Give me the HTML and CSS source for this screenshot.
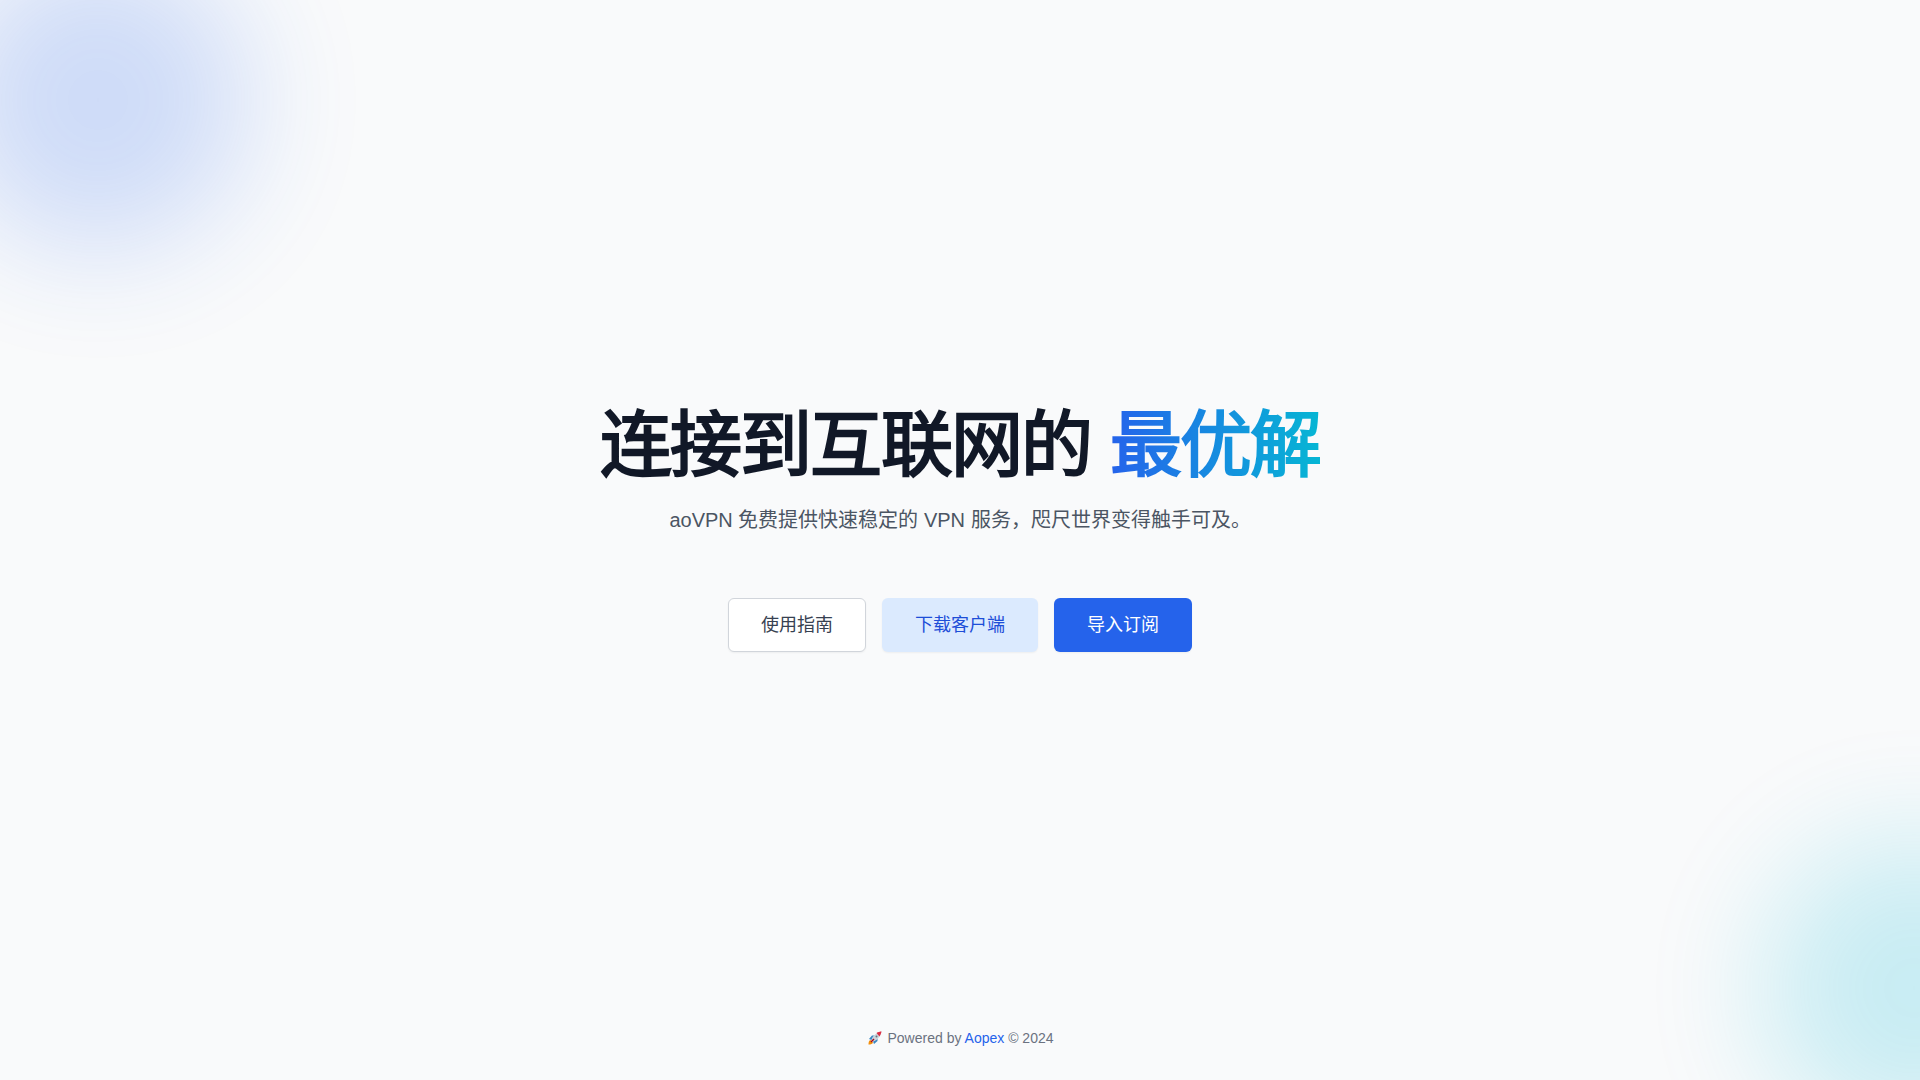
FILE: index.html
```html
<!DOCTYPE html>
<html lang="zh-CN">
<head>
<meta charset="utf-8">
<meta name="viewport" content="width=device-width, initial-scale=1">
<title>aoVPN</title>
<link rel="stylesheet" href="styles.css">
</head>
<body>
<div class="backdrop" aria-hidden="true">
  <div class="glow glow-blue"></div>
  <div class="glow glow-cyan"></div>
</div>
<main class="hero">
  <h1 class="title">连接到互联网的 <span class="accent">最优解</span></h1>
  <p class="lead">aoVPN 免费提供快速稳定的 VPN 服务，咫尺世界变得触手可及。</p>
  <div class="actions">
    <button class="btn btn-outline" type="button">使用指南</button>
    <button class="btn btn-soft" type="button">下载客户端</button>
    <button class="btn btn-solid" type="button">导入订阅</button>
  </div>
</main>
<footer class="footer">
  <svg class="rocket" viewBox="0 0 28 28" aria-hidden="true">
    <path d="M1 27c0-5 1-8 4-9l5 5c-1 3-4 4-9 4z" fill="#f4900c"/>
    <path d="M2 16l6-7h6l-7 9zM12 26l7-6v-6l-9 7z" fill="#3b88c3"/>
    <path d="M7 19c1-8 8-15 20-18-3 12-10 19-18 20z" fill="#ccd6dd"/>
    <path d="M17 4c3-2 7-3 10-3-1 4-2 7-4 10z" fill="#dd2e44"/>
    <circle cx="17" cy="11" r="2" fill="#66757f"/>
    <path d="M5 21l6-6 2 2-6 6z" fill="#a0041e"/>
  </svg>
  <span>Powered by <a href="#aopex">Aopex</a> © 2024</span>
</footer>
</body>
</html>
```
FILE: styles.css
```css
* { box-sizing: border-box; margin: 0; }
body {
  position: relative;
  display: flex;
  flex-direction: column;
  min-height: 100vh;
  background: #f9fafb;
  color: #111827;
  font-family: "Liberation Sans", sans-serif;
}
.backdrop { position: absolute; inset: 0; overflow: hidden; }
.glow {
  position: absolute;
  width: 300px;
  height: 300px;
  border-radius: 50%;
  filter: blur(60px);
  opacity: 0.2;
}
.glow-blue { top: -50px; left: -52px; background: #2563eb; }
.glow-cyan { right: -144px; bottom: -58px; background: #06b6d4; }
.hero {
  position: relative;
  flex: 1;
  display: flex;
  flex-direction: column;
  align-items: center;
  justify-content: center;
  padding: 96px 32px 32px;
  text-align: center;
}
.title { font-size: 72px; line-height: 72px; font-weight: 800; letter-spacing: -0.025em; }
.accent {
  background: linear-gradient(to right, #2563eb, #06b6d4);
  background-clip: text;
  color: transparent;
}
.lead { margin-top: 25px; font-size: 20px; line-height: 28px; color: #4b5563; }
.actions { display: flex; flex-wrap: wrap; justify-content: center; gap: 16px; margin-top: 64px; }
.btn {
  padding: 12px 32px;
  border: 1px solid transparent;
  border-radius: 6px;
  box-shadow: 0 1px 2px rgba(0, 0, 0, 0.05);
  font: 500 18px/28px "Liberation Sans", sans-serif;
  cursor: pointer;
}
.btn-outline { border-color: #d1d5db; background: #fff; color: #374151; }
.btn-soft { background: #dbeafe; color: #1d4ed8; }
.btn-solid { background: #2563eb; color: #fff; }
.footer {
  position: relative;
  display: flex;
  align-items: center;
  justify-content: center;
  gap: 5px;
  padding: 32px;
  font-size: 14px;
  line-height: 20px;
  color: #6b7280;
}
.rocket { width: 14px; height: 14px; margin-left: 2px; }
.footer a { color: #2563eb; text-decoration: none; }
```
